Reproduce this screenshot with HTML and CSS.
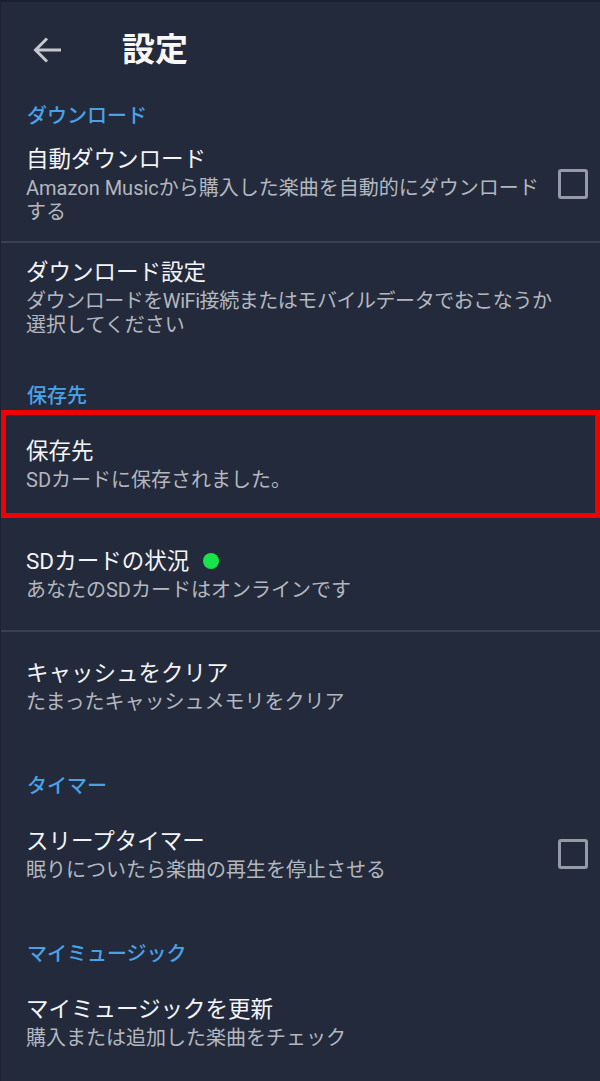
FILE: index.html
```html
<!DOCTYPE html>
<html lang="ja">
<head>
<meta charset="utf-8">
<title>設定</title>
<link rel="stylesheet" href="styles.css">
</head>
<body>
<div class="screen">
  <header class="appbar">
    <span class="back" aria-label="戻る">
      <svg viewBox="0 0 32 32" width="32" height="32"><path d="M29 16H4M15 4.5L3.5 16 15 27.5" fill="none" stroke="#c5c8ce" stroke-width="3" stroke-linecap="butt" stroke-linejoin="miter"/></svg>
    </span>
    <h1 class="appbar-title">設定</h1>
  </header>

  <div class="section section-first">ダウンロード</div>
  <div class="row row-multi row-first">
    <div class="row-text">
      <div class="row-title">自動ダウンロード</div>
      <div class="row-sub"><span class="line">Amazon Musicから購入した楽曲を自動的にダウンロード</span><span class="line">する</span></div>
    </div>
    <span class="checkbox"></span>
  </div>
  <div class="divider"></div>
  <div class="row row-multi">
    <div class="row-text">
      <div class="row-title">ダウンロード設定</div>
      <div class="row-sub"><span class="line tight">ダウンロードをWiFi接続またはモバイルデータでおこなうか</span><span class="line">選択してください</span></div>
    </div>
  </div>

  <div class="section">保存先</div>
  <div class="row row-highlight">
    <div class="row-text">
      <div class="row-title">保存先</div>
      <div class="row-sub">SDカードに保存されました。</div>
    </div>
  </div>
  <div class="row row-sd">
    <div class="row-text">
      <div class="row-title">SDカードの状況<span class="status-dot"></span></div>
      <div class="row-sub">あなたのSDカードはオンラインです</div>
    </div>
  </div>
  <div class="divider"></div>
  <div class="row">
    <div class="row-text">
      <div class="row-title">キャッシュをクリア</div>
      <div class="row-sub">たまったキャッシュメモリをクリア</div>
    </div>
  </div>

  <div class="section">タイマー</div>
  <div class="row">
    <div class="row-text">
      <div class="row-title">スリープタイマー</div>
      <div class="row-sub">眠りについたら楽曲の再生を停止させる</div>
    </div>
    <span class="checkbox"></span>
  </div>

  <div class="section">マイミュージック</div>
  <div class="row">
    <div class="row-text">
      <div class="row-title">マイミュージックを更新</div>
      <div class="row-sub">購入または追加した楽曲をチェック</div>
    </div>
  </div>
</div>
</body>
</html>
```

FILE: styles.css
```css
* { box-sizing: border-box; }
html, body {
  margin: 0;
  padding: 0;
  background: #232a3b;
}
body {
  width: 600px;
  height: 1081px;
  overflow: hidden;
  font-family: Roboto, "Noto Sans CJK JP", sans-serif;
  color: #f3f4f6;
}
.screen {
  width: 600px;
  height: 1081px;
  background: #232a3b;
  border-top: 2px solid #1b2030;
  border-left: 1px solid #1d2231;
}
.appbar {
  height: 96px;
  display: flex;
  align-items: center;
}
.back {
  display: flex;
  width: 32px;
  height: 32px;
  margin-left: 31px;
}
.appbar-title {
  margin: 0 0 0 58px;
  font-size: 33px;
  font-weight: 700;
  line-height: 40px;
  color: #f7f7f8;
}
.section {
  padding: 32px 0 0 26px;
  font-size: 20px;
  line-height: 28px;
  font-weight: 500;
  color: #4aa2e6;
}
.section-first { padding-top: 4px; }
.row {
  display: flex;
  align-items: center;
  padding: 26px 12px 26px 25px;
}
.row-text {
  flex: 1;
  min-width: 0;
}
.row-title {
  display: flex;
  align-items: center;
  font-size: 22.5px;
  line-height: 30px;
  color: #f3f4f6;
}
.row-sub {
  margin-top: 2px;
  font-size: 20px;
  line-height: 24px;
  color: #b3b7bf;
}
.line {
  display: block;
  white-space: nowrap;
}
.tight { letter-spacing: -0.45px; }
.row-multi { padding-top: 14px; padding-bottom: 13px; }
.row-first { padding-top: 14px; padding-bottom: 17px; }
.row-highlight {
  margin: 0 0 0 0;
  padding: 21px 12px 21px 20px;
  border: 5px solid #f00000;
}
.row-sd { padding-top: 28px; padding-bottom: 28px; }
.divider {
  height: 2px;
  background: #394151;
}
.checkbox {
  flex: none;
  width: 30px;
  height: 30px;
  border: 3px solid #959ba6;
  border-radius: 3px;
  margin-left: 16px;
}
.status-dot {
  display: inline-block;
  width: 16px;
  height: 16px;
  margin-left: 14px;
  border-radius: 50%;
  background: #18e34a;
}
```
